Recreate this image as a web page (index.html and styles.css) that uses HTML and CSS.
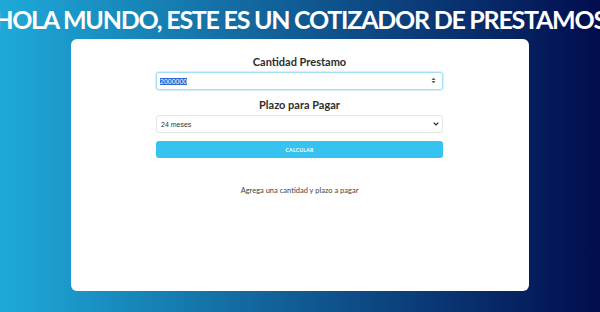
FILE: index.html
```html
<!DOCTYPE html>
<html lang="es">
<head>
    <meta charset="UTF-8">
    <meta name="viewport" content="width=device-width, initial-scale=1.0">
    <title>Cotizador de Prestamos</title>
    <link rel="stylesheet" href="styles.css">
</head>
<body>

<header class="title-bar">
    <h1>HOLA MUNDO, ESTE ES UN COTIZADOR DE PRESTAMOS</h1>
</header>

<main class="card">
    <form class="quote-form">
        <label for="cantidad">Cantidad Prestamo</label>
        <div class="field">
            <input type="number" id="cantidad" value="2000000">
            <!-- flechas del input numerico -->
            <svg class="spin" width="5" height="7" viewBox="0 0 5 7">
                <path d="M0.5 3 L2.5 0.8 L4.5 3 Z M0.5 4 L2.5 6.2 L4.5 4 Z" fill="#555"/>
            </svg>
        </div>

        <label for="plazo">Plazo para Pagar</label>
        <div class="field">
            <select id="plazo">
                <option value="6">6 meses</option>
                <option value="12">12 meses</option>
                <option value="24" selected>24 meses</option>
            </select>
            <svg class="chevron" width="6" height="4" viewBox="0 0 6 4">
                <path d="M0.7 0.7 L3 3 L5.3 0.7" fill="none" stroke="#222" stroke-width="1.2"/>
            </svg>
        </div>

        <button type="button">Calcular</button>
    </form>

    <p class="result">Agrega una cantidad y plazo a pagar</p>
</main>

<script>
    // Deja seleccionado el valor como en la captura
    let cantidad = document.getElementById("cantidad");
    cantidad.focus();
    cantidad.select();
</script>

</body>
</html>
```

FILE: styles.css
```css
html, body {
    height: 100%;
}
body {
    font-family: 'Lato', 'Noto Sans', sans-serif;
    margin: 0;
    padding: 0;
    background: linear-gradient(to right, #1eaad9, #020c4e);
    overflow: hidden;
}
.title-bar {
    display: flex;
    justify-content: center;
    padding-top: 2px;
    height: 37px;
}
.title-bar h1 {
    margin: 0;
    flex-shrink: 0;
    white-space: nowrap;
    color: #fff;
    font-size: 25px;
    font-weight: 700;
    letter-spacing: -1.25px;
    line-height: 34px;
}
.card {
    width: 458px;
    height: 252px;
    margin: 0 auto;
    background-color: #fff;
    border-radius: 6px;
    box-sizing: border-box;
    padding: 16px 86px 0 85px;
}
.quote-form {
    display: flex;
    flex-direction: column;
}
.quote-form label {
    text-align: center;
    font-size: 11px;
    font-weight: 700;
    color: #2d2d2d;
    line-height: 14px;
    margin-bottom: 3px;
}
.field {
    position: relative;
}
.quote-form input,
.quote-form select {
    display: block;
    width: 100%;
    height: 18px;
    box-sizing: border-box;
    border: 1px solid #e4e4e4;
    border-radius: 3px;
    font-family: 'Liberation Sans', sans-serif;
    font-size: 7px;
    padding: 0 4px;
    color: #333;
    background-color: #fff;
    appearance: none;
    -webkit-appearance: none;
    -moz-appearance: textfield;
}
.quote-form input {
    margin-bottom: 8px;
    padding-left: 3px;
}
.quote-form select {
    margin-bottom: 8px;
}
.quote-form input::-webkit-inner-spin-button,
.quote-form input::-webkit-outer-spin-button {
    -webkit-appearance: none;
    margin: 0;
}
.quote-form input:focus {
    outline: none;
    border-color: #a4def4;
    box-shadow: 0 0 0 1px #d8f2fb;
}
.spin {
    position: absolute;
    right: 7px;
    top: 5px;
    pointer-events: none;
}
.chevron {
    position: absolute;
    right: 4px;
    top: 7px;
    pointer-events: none;
}
.quote-form button {
    height: 17px;
    border: none;
    border-radius: 3px;
    background-color: #36c3f0;
    color: #fff;
    font-family: 'Lato', sans-serif;
    font-size: 5px;
    font-weight: 700;
    text-transform: uppercase;
    letter-spacing: 0.3px;
    cursor: pointer;
}
.result {
    margin: 28px 0 0;
    text-align: center;
    font-size: 7.5px;
    color: #444;
}
```
